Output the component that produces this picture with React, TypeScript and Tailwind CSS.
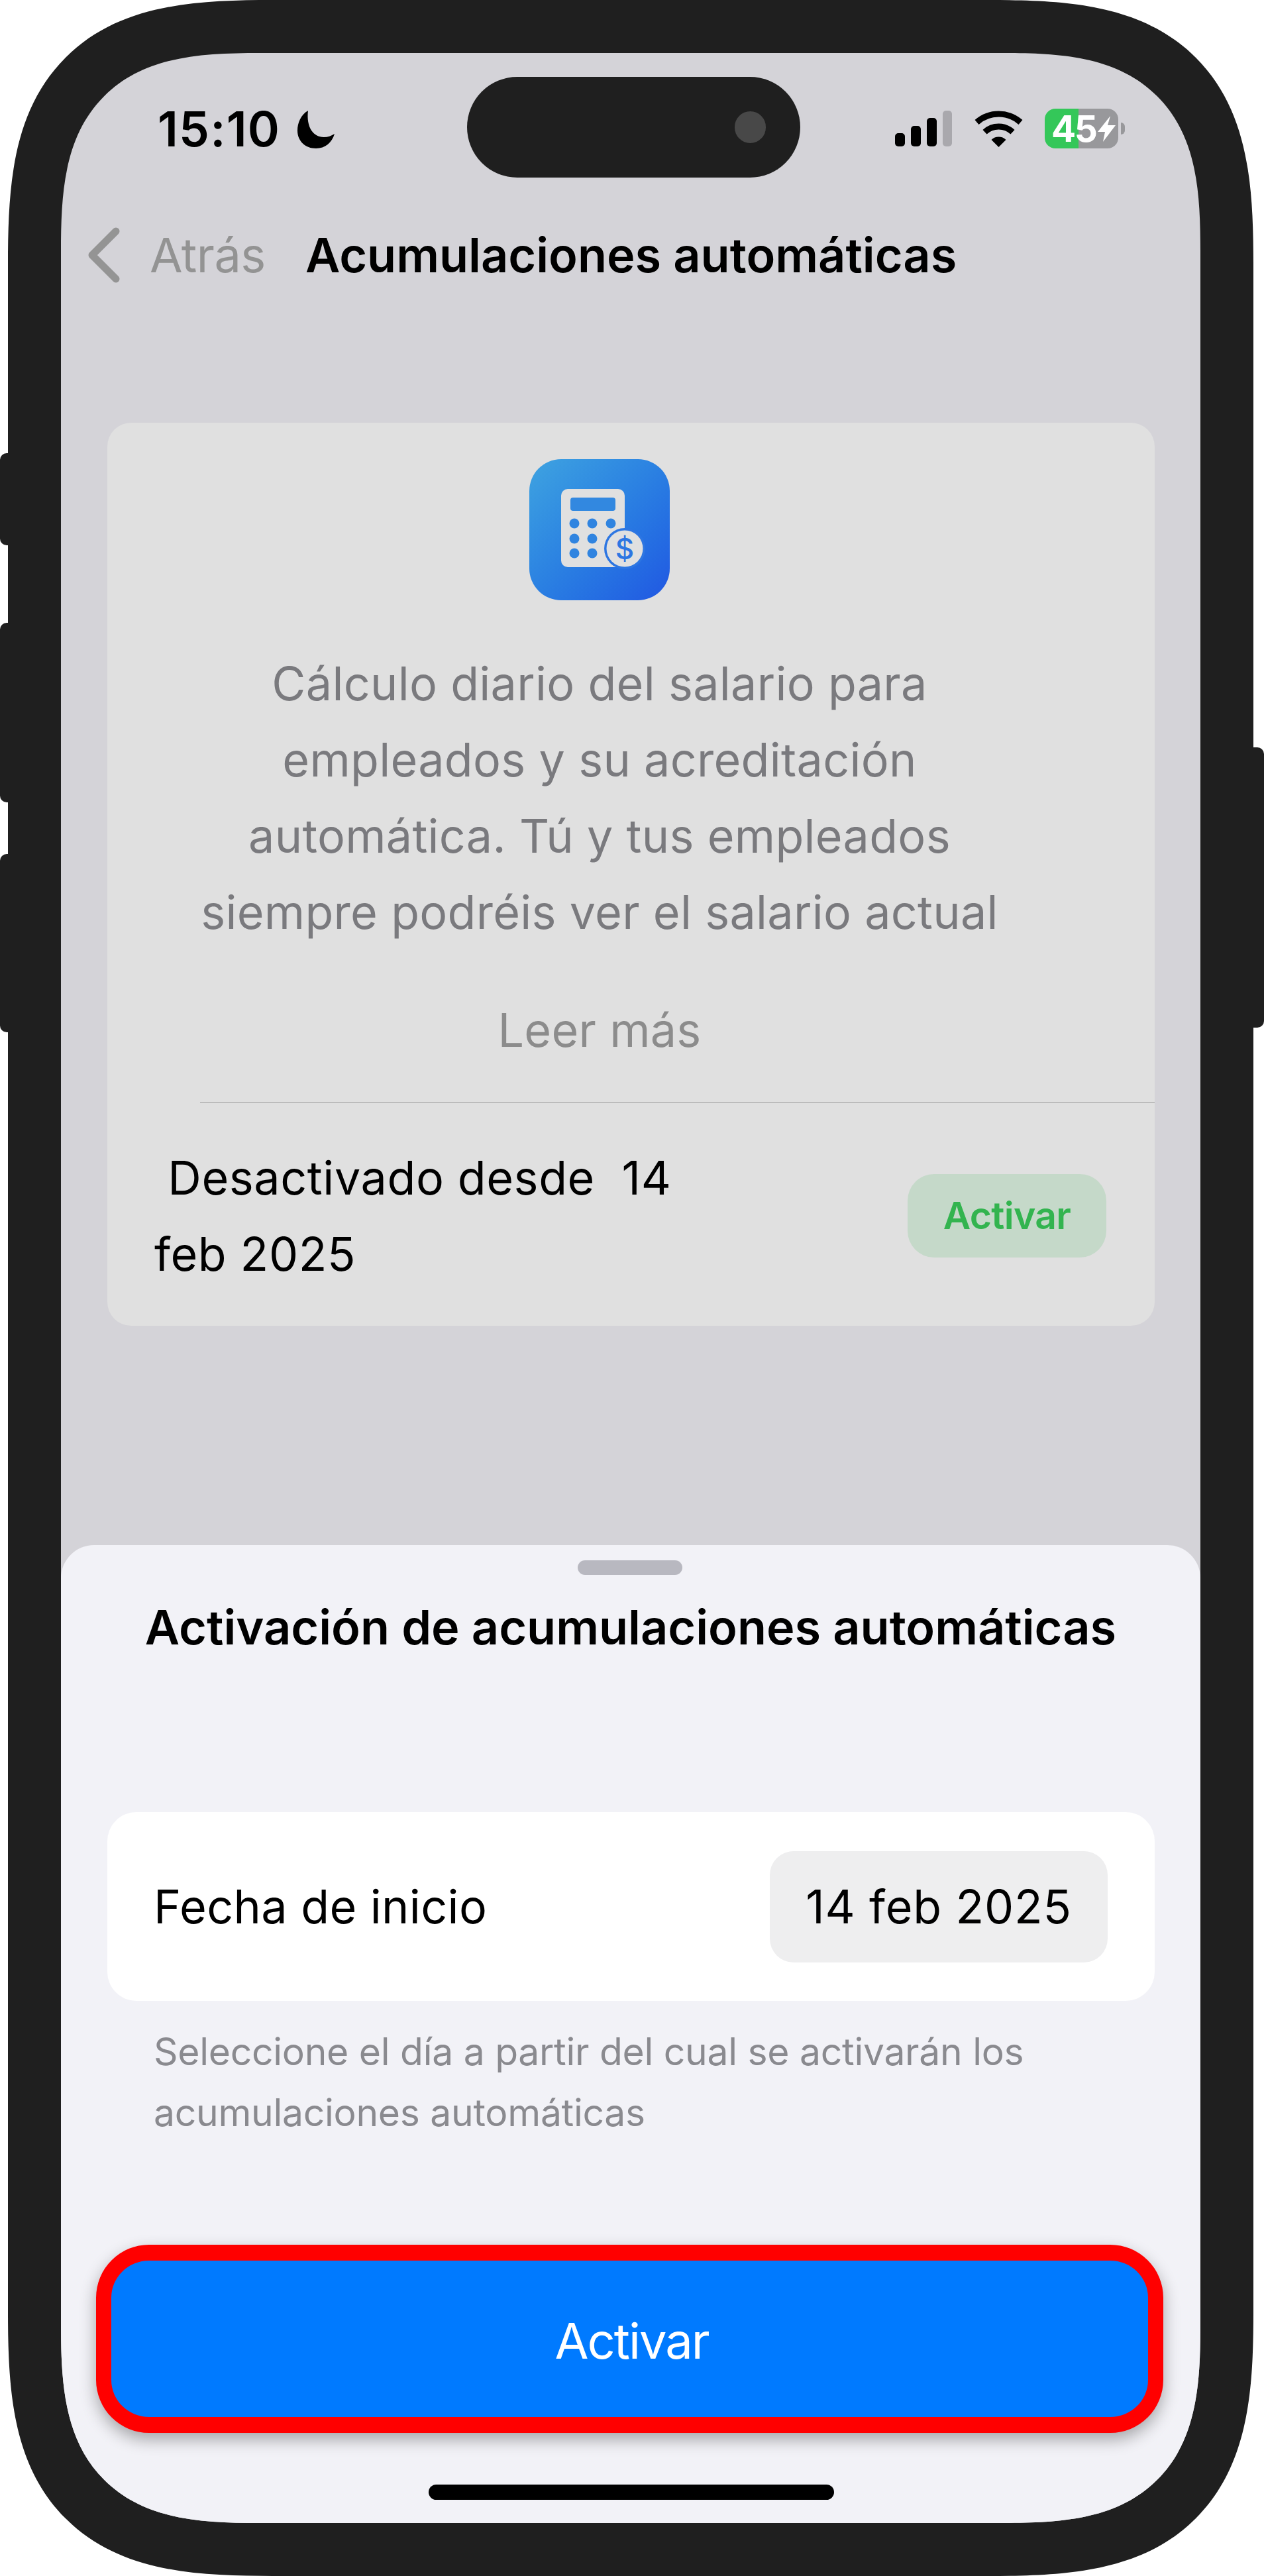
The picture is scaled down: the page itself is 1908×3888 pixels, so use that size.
import React from 'react';

const introLines = [
  'Cálculo diario del salario para',
  'empleados y su acreditación',
  'automática. Tú y tus empleados',
  'siempre podréis ver el salario actual',
];

const CalculatorIcon = () => (
  <div className="h-[213px] w-[212px] rounded-[48px] bg-linear-to-br from-[#3fa3e0] to-[#2257e2]">
    <svg viewBox="0 0 212 213" className="h-full w-full">
      <rect x="48" y="45" width="96" height="118" rx="10" fill="#e0e0e0" />
      <rect x="62" y="58" width="68" height="20" rx="4" fill="#3288e0" />
      {[68, 95, 123].map((cx) => (
        <circle key={cx} cx={cx} cy="97" r="7.5" fill="#3084e0" />
      ))}
      {[68, 95].map((cx) => (
        <circle key={cx} cx={cx} cy="120" r="7.5" fill="#3084e0" />
      ))}
      {[68, 95].map((cx) => (
        <circle key={cx} cx={cx} cy="142" r="7.5" fill="#3084e0" />
      ))}
      <circle cx="144" cy="135" r="31" fill="#2d76e2" />
      <circle cx="144" cy="135" r="27.5" fill="#e0e0e0" />
      <text x="144" y="151" textAnchor="middle" fontFamily="Inter, sans-serif" fontWeight="500" fontSize="44" fill="#2d76e2">
        $
      </text>
    </svg>
  </div>
);

const StatusIcons = () => (
  <div className="flex items-start pl-[143px] pt-[48px]">
    <div className="mt-[3px] flex h-[54px] items-end gap-[9px]">
      <div className="h-[20px] w-[15px] rounded-[5px] bg-black" />
      <div className="h-[31px] w-[15px] rounded-[5px] bg-black" />
      <div className="h-[43px] w-[15px] rounded-[5px] bg-black" />
      <div className="h-[54px] w-[14px] rounded-[5px] bg-[#a9a8ad]" />
    </div>
    <svg viewBox="0 0 75 55" className="ml-[33px] mt-[3px] h-[55px] w-[75px]">
      <path d="M4.5 17.5 A50 50 0 0 1 70.5 17.5" fill="none" stroke="#000" strokeWidth="9" />
      <path d="M16.5 32.2 A31 31 0 0 1 58.5 32.2" fill="none" stroke="#000" strokeWidth="9" />
      <path d="M26.5 44 A16 16 0 0 1 48.5 44 L37.5 55 Z" fill="#000" />
    </svg>
    <div className="ml-[32px] flex h-[60px] w-[111px] items-center rounded-[16px] bg-[linear-gradient(90deg,#34c759_51px,#98989b_51px)] pl-[10px]">
      <span className="text-[55px] leading-none font-bold tracking-[-2.5px] text-white">45</span>
      <svg viewBox="0 0 27 39" className="ml-[3px] h-[39px] w-[27px]">
        <path d="M19 0 L0 24 L11 24 L8 39 L27 14 L15 14 Z" fill="#fff" />
      </svg>
    </div>
    <div className="ml-[4px] mt-[21px] h-[18px] w-[6px] rounded-r-[6px] bg-[#98989b]" />
  </div>
);

const SideButton = ({ className }: { className: string }) => (
  <div className={`absolute w-[20px] bg-[#1f1f1f] ${className}`} />
);

export default function App() {
  return (
    <div className="relative h-[3888px] w-[1908px] overflow-hidden bg-white font-[Inter,sans-serif] text-black">
      <SideButton className="left-0 top-[684px] h-[139px] rounded-l-[10px]" />
      <SideButton className="left-0 top-[940px] h-[271px] rounded-l-[10px]" />
      <SideButton className="left-0 top-[1289px] h-[269px] rounded-l-[10px]" />
      <SideButton className="right-0 top-[1128px] h-[423px] rounded-r-[10px]" />

      <div className="ml-[12px] h-[3888px] w-[1880px] rounded-[400px] bg-[#1f1f1f] p-[80px] [corner-shape:superellipse(1.5)]">
        <div className="flex h-[3728px] w-[1720px] flex-col overflow-hidden rounded-[300px] bg-[#d4d3d8] [corner-shape:superellipse(1.5)]">
          {/* status bar */}
          <div className="flex h-[188px] shrink-0 pt-[36px]">
            <div className="flex w-[613px] items-start pl-[146px] pt-[44px]">
              <span className="text-[73px] leading-[70px] font-semibold tracking-[1.2px]">15:10</span>
              <svg viewBox="0 0 56 57" className="ml-[26px] mt-[7px] h-[57px] w-[56px]">
                <path d="M16 0 C5 6 0 19 0 30 C0 46 12 57 28 57 C42 57 52 48 56 35 C51 38 46 40 40 40 C24 40 13 25 16 0 Z" fill="#000" />
              </svg>
            </div>
            <div className="flex h-[152px] w-[503px] items-center justify-end rounded-full bg-[#1f1f1f] pr-[52px]">
              <div className="h-[48px] w-[47px] rounded-full bg-[#484848]" />
            </div>
            <StatusIcons />
          </div>

          {/* nav */}
          <div className="mt-[67px] flex h-[100px] shrink-0 items-center pl-[41px]">
            <svg viewBox="0 0 48 84" className="h-[84px] w-[48px]">
              <path d="M42 6 L6 42 L42 78" fill="none" stroke="#949494" strokeWidth="11" strokeLinecap="round" strokeLinejoin="round" />
            </svg>
            <span className="ml-[45px] text-[72px] leading-[100px] tracking-[-0.5px] text-[#939393]">Atrás</span>
            <span className="ml-[60px] text-[72px] leading-[100px] font-semibold">Acumulaciones automáticas</span>
          </div>

          {/* product card */}
          <div className="ml-[70px] mt-[203px] w-[1581px] shrink-0 rounded-[36px] bg-[#e0e0e0] pt-[55px] pb-[51px]">
            <div className="flex w-[1486px] flex-col items-center">
              <CalculatorIcon />
              <div className="mt-[68px] text-center text-[70px] leading-[115px] tracking-[0.3px] text-[#7a7a7e]">
                {introLines.map((line) => (
                  <div key={line}>{line}</div>
                ))}
              </div>
              <div className="mt-[63px] text-[70px] leading-[115px] tracking-[0.3px] text-[#8c8c8c]">Leer más</div>
            </div>
            <div className="ml-[140px] mt-[51px] h-[2px] bg-[#bcbcbc]" />
            <div className="mt-[55px] flex items-center justify-between pl-[71px] pr-[73px]">
              <div className="text-[70px] leading-[115px] tracking-[0.6px] whitespace-pre">
                <div> Desactivado desde  14</div>
                <div>feb 2025</div>
              </div>
              <div className="flex h-[126px] w-[300px] items-center justify-center rounded-[40px] bg-[#c5d9c9] text-[57px] font-semibold tracking-[-0.7px] text-[#33b44f]">
                Activar
              </div>
            </div>
          </div>

          {/* activation sheet */}
          <div className="mt-auto flex h-[1476px] shrink-0 flex-col rounded-t-[50px] bg-[#f2f2f7] pt-[23px]">
            <div className="ml-[780px] h-[22px] w-[158px] rounded-[11px] bg-[#b8b8c0]" />
            <div className="mt-[29px] text-center text-[72px] leading-[100px] font-semibold">
              Activación de acumulaciones automáticas
            </div>
            <div className="ml-[70px] mt-[229px] flex h-[285px] w-[1581px] items-center justify-between rounded-[44px] bg-white pl-[70px] pr-[71px]">
              <span className="text-[70px] tracking-[0.4px]">Fecha de inicio</span>
              <div className="flex h-[168px] w-[510px] items-center justify-center rounded-[36px] bg-[#eeeeef] text-[70px] tracking-[0.8px]">
                14 feb 2025
              </div>
            </div>
            <div className="ml-[140px] mt-[31px] text-[57px] leading-[92px] tracking-[-0.28px] text-[#8a8a8f]">
              <div>Seleccione el día a partir del cual se activarán los</div>
              <div>acumulaciones automáticas</div>
            </div>
            <button className="ml-[53px] mt-[153px] flex h-[284px] w-[1611px] items-center justify-center rounded-[80px] border-x-[23px] border-y-[24px] border-[#ff0000] bg-[#007aff] pl-[6px] pt-[6px] text-[74px] tracking-[-2px] text-white shadow-[0_10px_24px_rgba(0,0,0,0.32)]">
              Activar
            </button>
            <div className="ml-[555px] mt-[78px] h-[23px] w-[612px] rounded-full bg-black" />
          </div>
        </div>
      </div>
    </div>
  );
}
